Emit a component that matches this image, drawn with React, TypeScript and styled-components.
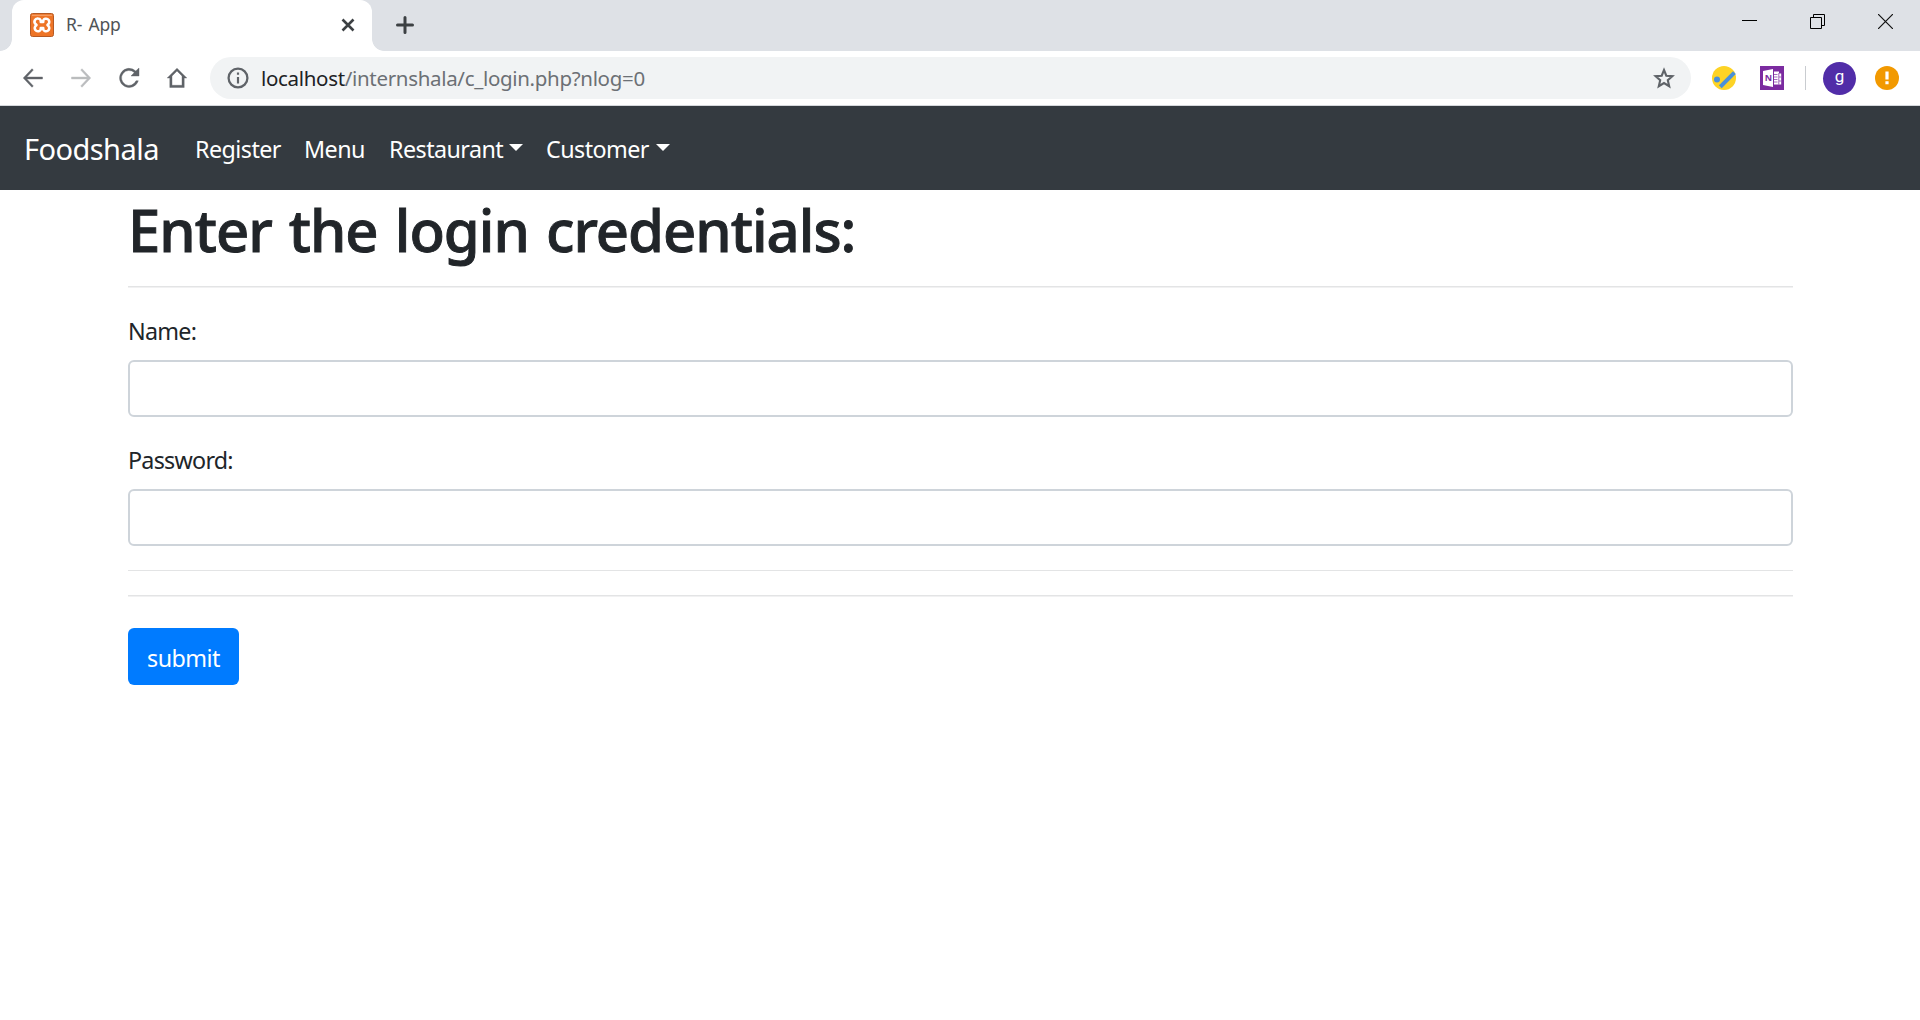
import React from "react";
import styled, { createGlobalStyle } from "styled-components";

const GlobalStyle = createGlobalStyle`
  *, *::before, *::after { box-sizing: border-box; }
  html, body, #root { height: 100%; }
  body { margin: 0; overflow: hidden; background: #fff; color: #212529; font-family: "Noto Sans", "Open Sans", sans-serif; }
  svg { display: block; flex: none; }
`;

const Browser = styled.div`
  display: flex;
  flex-direction: column;
  width: 100%;
  height: 1020px;
`;

const TabStrip = styled.div`
  display: flex;
  align-items: stretch;
  height: 51px;
  background: #dee1e6;
`;

const Foot = styled.div<{ $side: "left" | "right" }>`
  width: 12px;
  background: radial-gradient(circle 12px at ${(p) => (p.$side === "left" ? "0" : "100%")} 0, #dee1e6 11.5px, #fff 12.2px) bottom / 12px 12px no-repeat;
`;

const Tab = styled.div`
  display: flex;
  align-items: center;
  width: 360px;
  padding: 0 17px 1px 18px;
  background: #fff;
  border-radius: 12px 12px 0 0;
`;

const TabTitle = styled.span`
  flex: 1;
  margin-left: 12px;
  padding-bottom: 2px;
  color: #505357;
  font-size: 17.5px;
  line-height: 24px;
  letter-spacing: -0.2px;
  word-spacing: 2px;
`;

const NewTab = styled.div`
  display: flex;
  align-items: center;
  padding: 0 0 1px 12px;
  flex: 1;
`;

const WindowButtons = styled.div`
  display: flex;
  align-items: center;
  gap: 53px;
  padding: 0 27px 8px 0;
`;

const Toolbar = styled.div`
  display: flex;
  align-items: center;
  height: 55px;
  padding: 0 20px 0 21px;
  border-bottom: 1px solid #d5d8dc;
`;

const NavIcons = styled.div`
  display: flex;
  gap: 24px;
  width: 189px;
`;

const Omnibox = styled.div`
  display: flex;
  align-items: center;
  width: 1481px;
  height: 42px;
  padding: 0 15px;
  border-radius: 21px;
  background: #f1f3f4;
`;

const Url = styled.span`
  flex: 1;
  margin-left: 10px;
  color: #6c7075;
  font-size: 20.5px;
  line-height: 28px;
  letter-spacing: -0.32px;
`;

const Host = styled.span`
  color: #202124;
`;

const Extensions = styled.div`
  display: flex;
  align-items: center;
  gap: 24px;
  flex: 1;
  padding-left: 21px;
`;

const Divider = styled.div`
  width: 1px;
  height: 24px;
  margin: 0 -7px 0 -3px;
  background: #c9ccd0;
`;

const Avatar = styled.div`
  display: grid;
  place-items: center;
  width: 33px;
  height: 33px;
  margin-right: -5px;
  padding-bottom: 4px;
  border-radius: 50%;
  background: #512da8;
  color: #fff;
  font: 17px/28px Roboto, sans-serif;
`;

const Navbar = styled.nav`
  display: flex;
  align-items: center;
  height: 84px;
  padding: 1px 24px 0;
  background: #343a40;
  color: #fff;
`;

const Brand = styled.a`
  width: 159px;
  font-size: 29px;
  line-height: 45px;
  letter-spacing: -0.55px;
`;

const NavLink = styled.a<{ $width: number }>`
  display: flex;
  align-items: center;
  width: ${(p) => p.$width}px;
  padding-left: 12px;
  font-size: 23.3px;
  line-height: 36px;
  letter-spacing: -0.55px;
`;

const Caret = styled.span`
  margin: 0 11px 2px auto;
  border: 7.2px solid transparent;
  border-top-color: #fff;
  border-bottom: 0;
`;

const Page = styled.main`
  padding: 0 127px 0 128px;
`;

const Heading = styled.h1`
  margin: 0;
  height: 96px;
  font-size: 58px;
  font-weight: 500;
  line-height: 80px;
  letter-spacing: -1px;
  word-spacing: 3px;
  white-space: nowrap;
  -webkit-text-stroke: 0.9px #212529;
`;

const Rule = styled.hr<{ $after: number; $soft?: boolean }>`
  height: ${(p) => (p.$soft ? 2 : 1)}px;
  margin: 0 0 ${(p) => p.$after}px;
  border: 0;
  background: linear-gradient(#e3e4e5 1px, #f1f1f2 1px);
`;

const Label = styled.label`
  display: block;
  height: 48px;
  padding-top: 1px;
  font-size: 23.3px;
  line-height: 36px;
  letter-spacing: -0.75px;
`;

const Input = styled.input<{ $after: number }>`
  display: block;
  width: 100%;
  height: 57px;
  margin: 0 0 ${(p) => p.$after}px;
  padding: 9px 18px;
  border: 2px solid #ced4da;
  border-radius: 6px;
  background: #fff;
  font: inherit;
`;

const Submit = styled.button`
  display: block;
  width: 111px;
  height: 57px;
  padding: 3px 0 0;
  border: 0;
  border-radius: 6px;
  background: #007bff;
  color: #fff;
  font: 23.3px/36px "Noto Sans", sans-serif;
  letter-spacing: -0.55px;
`;

const Favicon = () => (
  <svg width="24" height="24" viewBox="0 0 24 24">
    <rect x=".5" y=".5" width="23" height="23" rx="2" fill="#ee7527" stroke="#b65a24" />
    <path d="M2 2.300h20" stroke="#f5a876" />
    <path d="M8 5.500a3.200 3.200 0 0 0-2.500 5.500L6.500 12l-1 1A3.200 3.200 0 1 0 10.800 16.500V15h2.400v1.500A3.200 3.200 0 1 0 18.500 13l-1-1 1-1A3.200 3.200 0 1 0 13.200 7.500V9h-2.400V7.500A3.200 3.200 0 0 0 8 5.500Z" fill="none" stroke="#fff" strokeWidth="2.600" strokeLinejoin="round" />
  </svg>
);

const CloseIcon = () => (
  <svg width="14" height="14" viewBox="0 0 14 14" stroke="#3c4043" strokeWidth="2.6">
    <path d="M1.500 1.500l11 11M12.500 1.500l-11 11" />
  </svg>
);

const PlusIcon = () => (
  <svg width="18" height="18" viewBox="0 0 18 18" stroke="#3c4043" strokeWidth="3" strokeLinecap="round">
    <path d="M1.500 9h15M9 1.500v15" />
  </svg>
);

const MaterialIcon = ({ d, color = "#5f6368", weight = 0.4 }: { d: string; color?: string; weight?: number }) => (
  <svg width="24" height="24" viewBox="0 0 24 24" fill={color} stroke={color} strokeWidth={weight}>
    <path d={d} />
  </svg>
);

const BACK = "M21.500 11H5.800l6.500-6.900L11 2.700 2.200 12l8.800 9.300 1.300-1.400L5.800 13h15.700z";
const FORWARD = "M2.500 11h15.700l-6.500-6.900L13 2.700l8.800 9.300-8.800 9.300-1.300-1.400 6.500-6.900H2.500z";
const RELOAD = "M18.800 5A9.600 9.600 0 1 0 21.300 14.800h-2.300A7.500 7.500 0 1 1 17.300 6.600L14 10h8V2z";
const HOME = "M12 2.200L2.200 12h2.600v9.500h14.400V12h2.600zM12 5l5 5v9.300H7V10z";

const InfoIcon = () => (
  <svg width="26" height="26" viewBox="0 0 24 24" fill="#5f6368">
    <path d="M11 7h2v2h-2zm0 4h2v6h-2z" />
    <circle cx="12" cy="12" r="8.700" fill="none" stroke="#5f6368" strokeWidth="2.100" />
  </svg>
);

const StarIcon = () => (
  <svg width="24" height="24" viewBox="0 0 24 24" fill="none" stroke="#5f6368" strokeWidth="2.100">
    <path d="M12 4l2.300 5.700 6.100.500-4.600 4 1.400 6L12 17l-5.200 3.200 1.400-6-4.600-4 6.100-.500z" />
  </svg>
);

const TickExtension = () => (
  <svg width="24" height="24" viewBox="0 0 24 24">
    <circle cx="12" cy="12" r="12" fill="#fdd325" />
    <circle cx="5" cy="13.500" r="3" fill="#4a90d9" />
    <path d="M9.700 19.300L21 8" stroke="#4a90d9" strokeWidth="4" strokeLinecap="square" />
  </svg>
);

const OneNoteText = styled.text`
  font: bold 9px "Noto Sans", sans-serif;
`;

const OneNote = () => (
  <svg width="24" height="24" viewBox="0 0 24 24">
    <path d="M0 0h24v24H0z" fill="#7b2ba0" />
    <path d="M3 5l10-2v18L3 19zM14 5.500h5v2h2.200v11H14z" fill="#fff" />
    <path d="M14 8.500h3.500M14 11h3.500M14 13.500h3.500M14 16h3.500M18.800 7v11.500M19 11h2.200M19 15h2.200" stroke="#7b2ba0" strokeWidth=".7" />
    <OneNoteText x="4.700" y="15.200" fill="#7b2ba0">N</OneNoteText>
  </svg>
);

const Alert = () => (
  <svg width="24" height="24" viewBox="0 0 24 24">
    <circle cx="12" cy="12" r="12" fill="#f29900" />
    <path d="M10.400 5.500h3.200v8h-3.200zM10.400 15.200h3.200v3h-3.200z" fill="#fff" />
  </svg>
);

const links = [
  { label: "Register", width: 109 },
  { label: "Menu", width: 85 },
  { label: "Restaurant", width: 157, menu: true },
  { label: "Customer", width: 147, menu: true },
];

export default function App() {
  return (
    <Browser>
      <GlobalStyle />
      <TabStrip>
        <Foot $side="left" />
        <Tab>
          <Favicon />
          <TabTitle>R- App</TabTitle>
          <CloseIcon />
        </Tab>
        <Foot $side="right" />
        <NewTab><PlusIcon /></NewTab>
        <WindowButtons>
          <svg width="15" height="15" viewBox="0 0 15 15"><path d="M0 6.500h15" stroke="#000" /></svg>
          <svg width="15" height="15" viewBox="0 0 15 15" fill="none" stroke="#000"><path d="M.5 3.500h11v11H.5zM3.500 3.500v-3h11v11h-3" /></svg>
          <svg width="15" height="15" viewBox="0 0 15 15" stroke="#111" strokeWidth="1.200"><path d="M0 0l15 15M15 0L0 15" /></svg>
        </WindowButtons>
      </TabStrip>
      <Toolbar>
        <NavIcons>
          <MaterialIcon d={BACK} />
          <MaterialIcon d={FORWARD} color="#babcbe" />
          <MaterialIcon d={RELOAD} />
          <MaterialIcon d={HOME} />
        </NavIcons>
        <Omnibox>
          <InfoIcon />
          <Url><Host>localhost</Host>/internshala/c_login.php?nlog=0</Url>
          <StarIcon />
        </Omnibox>
        <Extensions>
          <TickExtension />
          <OneNote />
          <Divider />
          <Avatar>g</Avatar>
          <Alert />
        </Extensions>
      </Toolbar>
      <Navbar>
        <Brand>Foodshala</Brand>
        {links.map((link) => (
          <NavLink key={link.label} $width={link.width}>
            {link.label}
            {link.menu && <Caret />}
          </NavLink>
        ))}
      </Navbar>
      <Page>
        <Heading>Enter the login credentials:</Heading>
        <Rule $after={24} $soft />
        <Label htmlFor="name">Name:</Label>
        <Input id="name" $after={24} />
        <Label htmlFor="password">Password:</Label>
        <Input id="password" type="password" $after={24} />
        <Rule $after={24} />
        <Rule $after={31} $soft />
        <Submit>submit</Submit>
      </Page>
    </Browser>
  );
}
